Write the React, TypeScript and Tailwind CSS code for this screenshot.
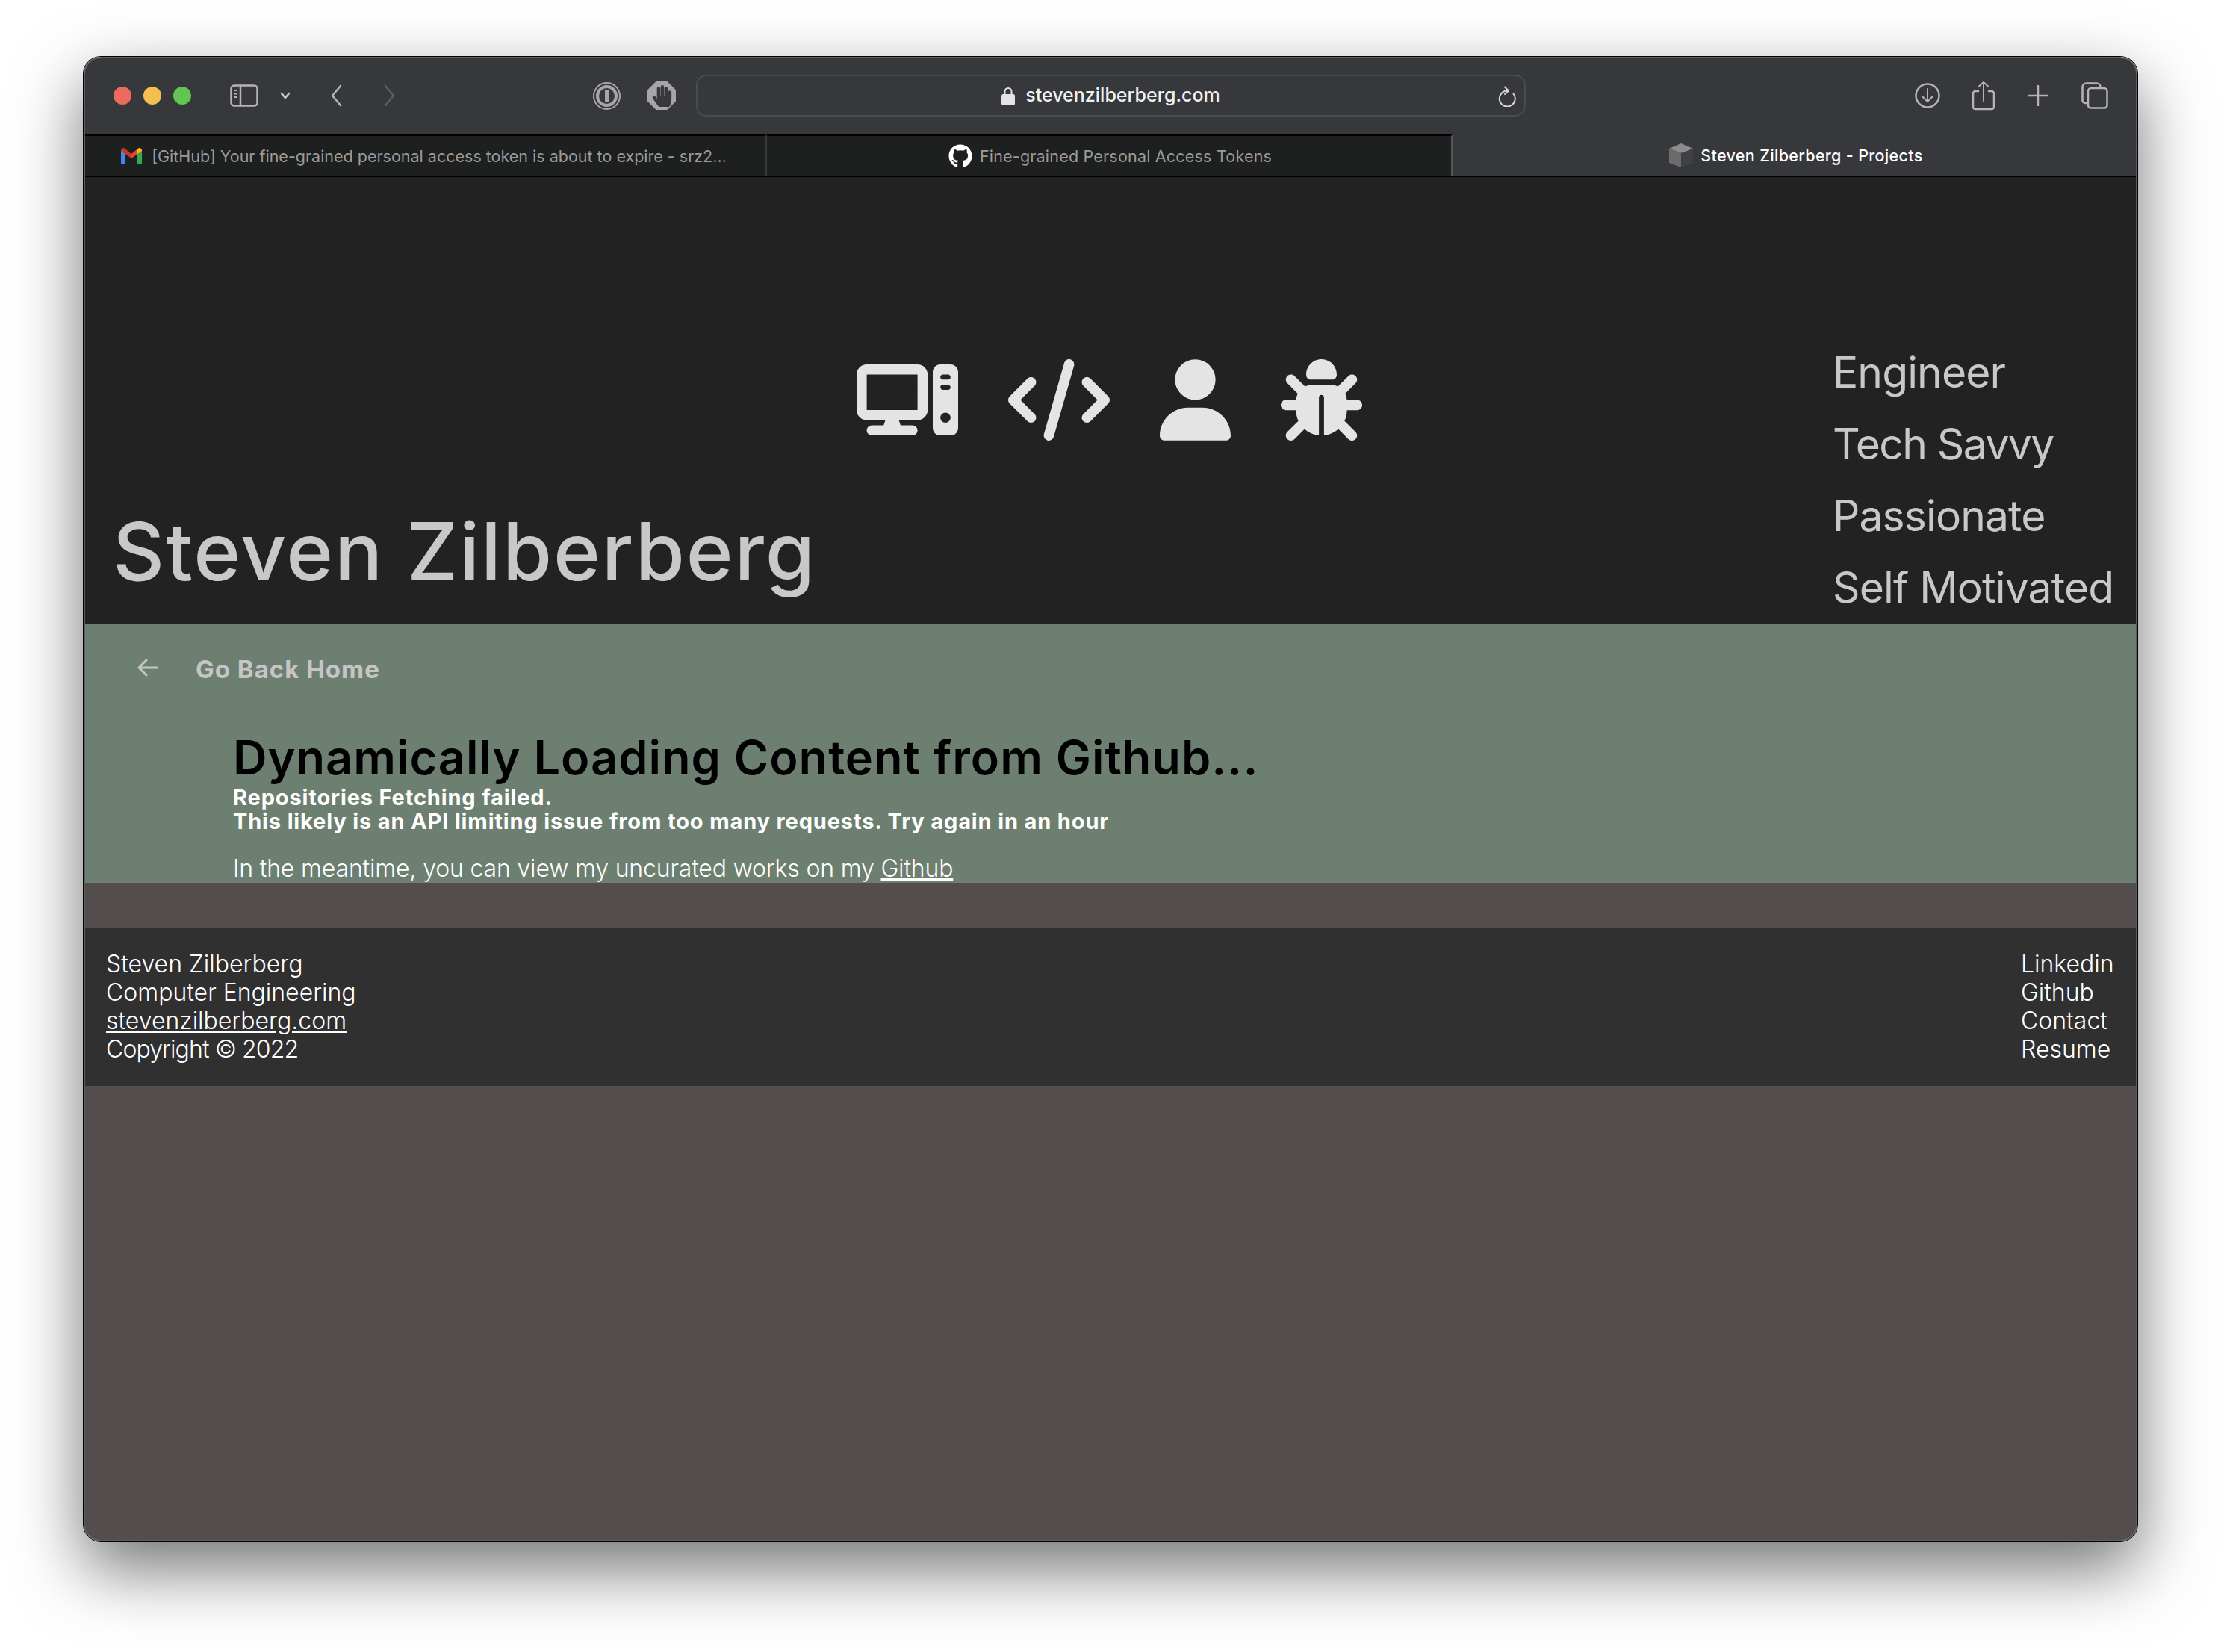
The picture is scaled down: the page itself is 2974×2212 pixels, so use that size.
import { FaGithub, FaHandPaper } from 'react-icons/fa';
import { FaBug, FaCode, FaComputer, FaUser } from 'react-icons/fa6';

const raleway = "font-['Inter','Liberation_Sans',sans-serif]";

function TrafficLights() {
  return (
    <div className="flex gap-4">
      <span className="size-6 rounded-full bg-[#ed6a5e]" />
      <span className="size-6 rounded-full bg-[#f4bf4f]" />
      <span className="size-6 rounded-full bg-[#61c554]" />
    </div>
  );
}

function SidebarIcon() {
  return (
    <svg width="38" height="30" viewBox="0 0 38 30" fill="none" stroke="#b4b4b4" strokeWidth="2.5">
      <rect x="1.5" y="1.5" width="35" height="27" rx="4" />
      <path d="M14 2v26" />
      <path d="M5 8h5M5 12.5h5M5 17h5" strokeWidth="2" />
    </svg>
  );
}

function Chevron({ d, color, w, h }: { d: string; color: string; w: number; h: number }) {
  return (
    <svg width={w} height={h} viewBox={`0 0 ${w} ${h}`} fill="none" stroke={color} strokeWidth="2.6" strokeLinecap="round" strokeLinejoin="round">
      <path d={d} />
    </svg>
  );
}

function OnePassword() {
  return (
    <svg width="37" height="37" viewBox="0 0 37 37" fill="none">
      <circle cx="18.5" cy="18.5" r="17.5" stroke="#a6a6a6" strokeWidth="2" />
      <circle cx="18.5" cy="18.5" r="12.5" stroke="#a6a6a6" strokeWidth="4" />
      <rect x="16" y="10" width="5" height="17" rx="1" fill="#a6a6a6" />
    </svg>
  );
}

function HandStop() {
  return (
    <div className="relative flex size-[38px] items-center justify-center">
      <svg width="38" height="38" viewBox="0 0 38 38" className="absolute inset-0">
        <path d="M11.5 0h15L38 11.5v15L26.5 38h-15L0 26.5v-15z" fill="#a6a6a6" />
      </svg>
      <FaHandPaper className="relative size-[29px] text-[#37383b]" />
    </div>
  );
}

function GmailIcon() {
  return (
    <svg width="28" height="22" viewBox="0 0 28 22">
      <path d="M0 3v17a2 2 0 0 0 2 2h4V8z" fill="#4285f4" />
      <path d="M22 8v14h4a2 2 0 0 0 2-2V3z" fill="#34a853" />
      <path d="M0 3.5C0 .5 3 -1 5.5 1L14 8v6L0 4z" fill="#c5362b" />
      <path d="M14 8l8.500-7C25 -1 28 .5 28 3.500V4L14 14z" fill="#ea4335" />
      <path d="M22 1.500C25 -1 28 .5 28 3.500V4l-6 4z" fill="#fbbc04" />
    </svg>
  );
}

function CubeIcon() {
  return (
    <svg width="32" height="32" viewBox="0 0 32 32">
      <path d="M16 0l16 7-15 6L0 7z" fill="#8b8b8b" />
      <path d="M0 7l16 6v19L0 26z" fill="#6b6b6b" />
      <path d="M32 7l-16 6v19l16-6z" fill="#404144" />
    </svg>
  );
}

function Toolbar() {
  return (
    <div className="flex h-[102px] items-center bg-[#37383b] pr-[37px] pb-[2px] pl-[38px]">
      <TrafficLights />
      <div className="ml-[52px]">
        <SidebarIcon />
      </div>
      <div className="ml-[15px] h-9 w-px bg-[#55565a]" />
      <div className="ml-3 flex">
        <Chevron w={16} h={10} d="M3 2l5 6 5-6" color="#c8c8c8" />
      </div>
      <div className="ml-[52px] flex">
        <Chevron w={17} h={30} d="M14 2L3 15l11 13" color="#b4b4b4" />
      </div>
      <div className="ml-[54px] flex">
        <Chevron w={17} h={30} d="M3 2l11 13L3 28" color="#5c5d60" />
      </div>
      <div className="ml-[264px] flex">
        <OnePassword />
      </div>
      <div className="ml-9">
        <HandStop />
      </div>
      <div className="relative ml-[27px] flex h-14 w-[1111px] items-center justify-center gap-[14px] rounded-[14px] border-2 border-[#4a4b4f] font-['Inter',sans-serif] text-[25px] font-medium text-[#f0f0f0]">
        <svg width="18" height="25" viewBox="0 0 18 25" fill="none">
          <path d="M4.500 11V6.500a4.500 4.500 0 0 1 9 0V11" stroke="#e4e4e4" strokeWidth="2" />
          <rect x="0" y="10" width="18" height="15" rx="2.500" fill="#e4e4e4" />
        </svg>
        <span>stevenzilberberg.com</span>
        <svg className="absolute top-[13px] right-[11px]" width="24" height="28" viewBox="0 0 24 28" fill="none" stroke="#d8d8d8" strokeWidth="2" strokeLinecap="round" strokeLinejoin="round">
          <path d="M20.500 10.500A10.500 10.500 0 1 1 12 6.500" />
          <path d="M9 1.500l5 5-5 4.500" />
        </svg>
      </div>
      <div className="ml-auto flex items-center">
        <svg width="34" height="38" viewBox="0 0 34 38" fill="none" stroke="#b4b4b4" strokeWidth="2.500" strokeLinecap="round" strokeLinejoin="round">
          <circle cx="17" cy="19" r="15.500" />
          <path d="M17 10v17M10.500 20.500L17 27l6.500-6.500" strokeWidth="2" />
        </svg>
        <svg className="ml-[42px]" width="32" height="40" viewBox="0 0 32 40" fill="none" stroke="#b4b4b4" strokeWidth="2.500" strokeLinecap="round" strokeLinejoin="round">
          <path d="M9 14H5a3 3 0 0 0-3 3v18a3 3 0 0 0 3 3h22a3 3 0 0 0 3-3V17a3 3 0 0 0-3-3h-4" />
          <path d="M16 27V2M9.500 8L16 2l6.500 6" strokeWidth="2" />
        </svg>
        <svg className="ml-[43px]" width="28" height="28" viewBox="0 0 28 28" fill="none" stroke="#b4b4b4" strokeWidth="2.500" strokeLinecap="round">
          <path d="M14 1v26M1 14h26" />
        </svg>
        <svg className="ml-[44px]" width="36" height="36" viewBox="0 0 36 36" fill="none" stroke="#b4b4b4" strokeWidth="2.500">
          <path d="M8 28H5a3.500 3.500 0 0 1-3.500-3.500v-18A5 5 0 0 1 6.500 1.500h14A5 5 0 0 1 25.500 6.500V8" />
          <rect x="9" y="8" width="25.500" height="26.500" rx="4" />
        </svg>
      </div>
    </div>
  );
}

function TabBar() {
  return (
    <div className="flex h-[57px] border-b border-black font-['Inter',sans-serif] text-[21.5px]">
      <div className="flex w-[913px] items-center justify-center gap-[13px] border-t-2 border-r-2 border-t-black border-r-[#38393b] bg-[#1e1f1f] pr-1 text-[#9b9b9b]">
        <GmailIcon />
        <span>[GitHub] Your fine-grained personal access token is about to expire - srz2...</span>
      </div>
      <div className="flex w-[918px] items-center justify-center gap-[10px] border-t-2 border-r-2 border-t-black border-r-[#55565a] bg-[#1e1f1f] pl-[3px] text-[#9b9b9b]">
        <FaGithub className="size-8 text-white" />
        <span className="tracking-[0.2px]">Fine-grained Personal Access Tokens</span>
      </div>
      <div className="flex flex-1 items-center justify-center gap-[10px] bg-[#37383b] pl-[5px] font-medium text-white">
        <CubeIcon />
        <span className="tracking-[0.33px]">Steven Zilberberg - Projects</span>
      </div>
    </div>
  );
}

function Hero() {
  return (
    <header className="flex h-[599px] items-end bg-[#222222] text-[#c8c8c8]">
      <h1 className="w-[1033px] pb-[44px] pl-[37px] text-[107px] leading-[108px] font-medium tracking-[1.9px] whitespace-nowrap">
        Steven Zilberberg
      </h1>
      <div className="flex gap-[67px] self-start pt-[244px] text-[#e5e4e5]">
        <FaComputer className="size-[109px] w-[136px]" />
        <FaCode className="size-[109px] w-[136px]" />
        <FaUser className="size-[109px] w-[95px]" />
        <FaBug className="size-[109px]" />
      </div>
      <div className="ml-auto w-[406px] pb-px text-[57px] leading-[96px] tracking-[-0.9px]">
        <div>Engineer</div>
        <div className="tracking-[-1.6px]">Tech Savvy</div>
        <div>Passionate</div>
        <div>Self Motivated</div>
      </div>
    </header>
  );
}

function Content() {
  return (
    <section className="h-[346px] overflow-hidden bg-[#6d7f70]">
      <div className="flex items-center pt-10 pl-[70px] text-[33px] leading-10 font-bold tracking-[1px] text-[#c5c5c5]">
        <svg width="28" height="24" viewBox="0 0 28 24" fill="none" stroke="#c5c5c5" strokeWidth="3" strokeLinecap="round" strokeLinejoin="round" className="-mt-1">
          <path d="M27 12H2M12 2L2 12l10 10" />
        </svg>
        <span className="ml-[50px]">Go Back Home</span>
      </div>
      <div className="pl-[198px]">
        <h2 className="mt-[63px] text-[63px] leading-[70px] font-semibold tracking-[1px] text-black">
          Dynamically Loading Content from Github...
        </h2>
        <p className="mt-[3px] text-[29px] leading-8 font-bold tracking-[0.85px] text-white">
          Repositories Fetching failed.
          <br />
          This likely is an API limiting issue from too many requests. Try again in an hour
        </p>
        <p className="mt-7 text-[32px] leading-[38px] font-light tracking-[-0.16px] text-white">
          In the meantime, you can view my uncurated works on my <span className="underline">Github</span>
        </p>
      </div>
    </section>
  );
}

function Footer() {
  return (
    <footer className="flex h-[212px] justify-between bg-[#313030] pt-[30px] pr-[30px] pl-[28px] text-[32px] leading-[38px] font-light text-white">
      <div>
        <div>Steven Zilberberg</div>
        <div>Computer Engineering</div>
        <div className="underline">stevenzilberberg.com</div>
        <div className="tracking-[-0.9px]">Copyright © 2022</div>
      </div>
      <div className="w-[124px]">
        <div>Linkedin</div>
        <div>Github</div>
        <div>Contact</div>
        <div>Resume</div>
      </div>
    </footer>
  );
}

export default function App() {
  return (
    <div className="h-[2212px] w-[2974px] overflow-hidden bg-white pt-[75px] pl-[111px]">
      <div className="h-[1990px] w-[2752px] rounded-[24px] border border-black shadow-[0_36px_90px_rgba(0,0,0,0.55)]">
        <div className={`flex h-full flex-col overflow-hidden rounded-[23px] border-2 border-[#5f5f61] bg-[#534d4d] ${raleway}`}>
          <Toolbar />
          <TabBar />
          <Hero />
          <Content />
          <div className="h-[60px] shrink-0" />
          <Footer />
        </div>
      </div>
    </div>
  );
}
